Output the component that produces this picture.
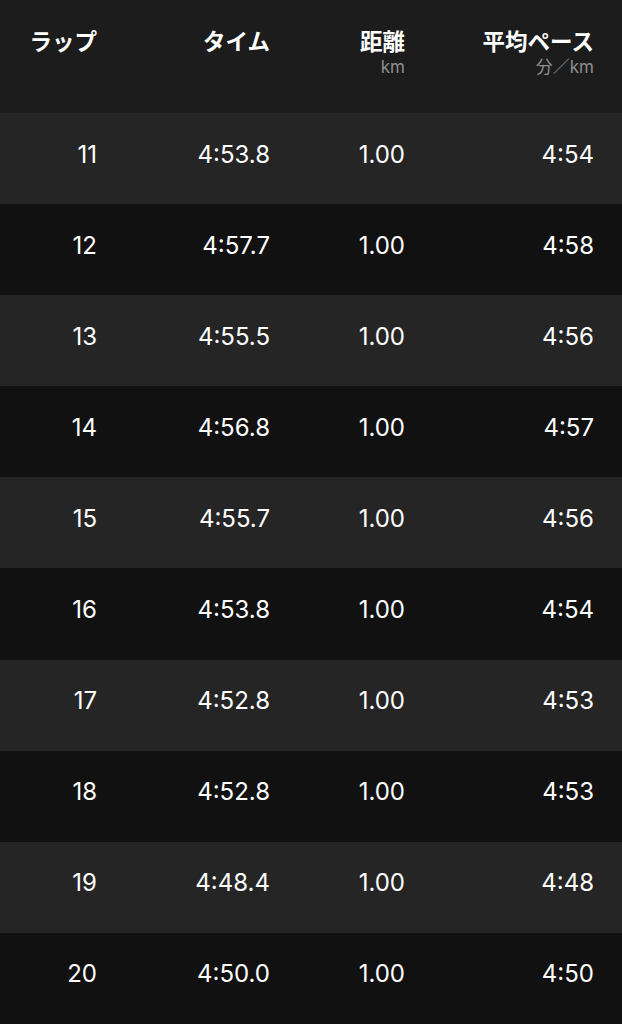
const laps = [
  { lap: 11, time: "4:53.8", dist: "1.00", pace: "4:54" },
  { lap: 12, time: "4:57.7", dist: "1.00", pace: "4:58" },
  { lap: 13, time: "4:55.5", dist: "1.00", pace: "4:56" },
  { lap: 14, time: "4:56.8", dist: "1.00", pace: "4:57" },
  { lap: 15, time: "4:55.7", dist: "1.00", pace: "4:56" },
  { lap: 16, time: "4:53.8", dist: "1.00", pace: "4:54" },
  { lap: 17, time: "4:52.8", dist: "1.00", pace: "4:53" },
  { lap: 18, time: "4:52.8", dist: "1.00", pace: "4:53" },
  { lap: 19, time: "4:48.4", dist: "1.00", pace: "4:48" },
  { lap: 20, time: "4:50.0", dist: "1.00", pace: "4:50" },
];

const cols = "grid grid-cols-[97px_173px_135px_189px] pr-[28px]";

export default function App() {
  return (
    <div className="h-[1024px] w-[622px] overflow-hidden bg-[#1c1c1c] font-['Inter','Noto_Sans_CJK_JP',sans-serif] text-white">
      <div className={`${cols} h-[113px] pt-[27px] text-right`}>
        <div className="text-[22.5px] font-bold leading-[30px]">ラップ</div>
        <div className="text-[22.5px] font-bold leading-[30px]">タイム</div>
        <div>
          <div className="text-[22.5px] font-bold leading-[30px]">距離</div>
          <div className="text-[17px] leading-[21px] text-[#8e8e8e]">km</div>
        </div>
        <div>
          <div className="text-[22.5px] font-bold leading-[30px]">平均ペース</div>
          <div className="text-[17px] leading-[21px] text-[#8e8e8e]">分／km</div>
        </div>
      </div>

      {laps.map((row, i) => (
        <div
          key={row.lap}
          className={`${cols} h-[91.1px] items-center text-right text-[24px] leading-none ${
            i % 2 === 0 ? "bg-[#252525]" : "bg-[#111111]"
          }`}
        >
          <div className="pb-[8px]">{row.lap}</div>
          <div className="pb-[8px]">{row.time}</div>
          <div className="pb-[8px]">{row.dist}</div>
          <div className="pb-[8px]">{row.pace}</div>
        </div>
      ))}
    </div>
  );
}
